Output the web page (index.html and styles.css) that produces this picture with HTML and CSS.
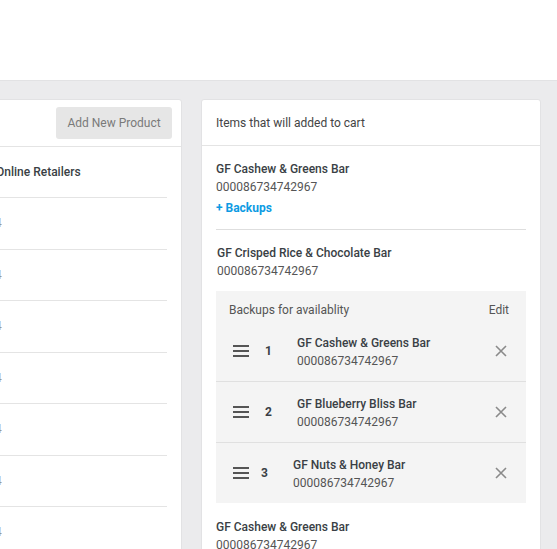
FILE: index.html
```html
<!DOCTYPE html>
<html>
<head>
<meta charset="utf-8">
<link rel="stylesheet" href="styles.css">
</head>
<body>
<div class="topbar"></div>
<div class="main">
  <div class="card left">
    <div class="left-head">
      <button class="btn">Add New Product</button>
    </div>
    <div class="lrow lrow-head"><span class="lhead">Online Retailers</span></div>
    <div class="lrow"><span class="lval">4</span></div>
    <div class="lrow"><span class="lval">4</span></div>
    <div class="lrow"><span class="lval">4</span></div>
    <div class="lrow"><span class="lval">4</span></div>
    <div class="lrow"><span class="lval">4</span></div>
    <div class="lrow"><span class="lval">4</span></div>
    <div class="lrow"><span class="lval">4</span></div>
  </div>
  <div class="card right">
    <div class="right-head">Items that will added to cart</div>
    <div class="right-body">
      <div class="item item-first">
        <div class="name">GF Cashew &amp; Greens Bar</div>
        <div class="code">000086734742967</div>
        <div class="backups-link">+ Backups</div>
      </div>
      <div class="item item-second">
        <div class="name">GF Crisped Rice &amp; Chocolate Bar</div>
        <div class="code">000086734742967</div>
      </div>
      <div class="panel">
        <div class="panel-head">
          <span>Backups for availablity</span>
          <span class="edit">Edit</span>
        </div>
        <div class="brow">
          <span class="drag"><i></i><i></i><i></i></span>
          <span class="num">1</span>
          <div class="binfo">
            <div class="name">GF Cashew &amp; Greens Bar</div>
            <div class="code">000086734742967</div>
          </div>
          <svg class="close" width="12" height="12" viewBox="0 0 12 12"><path d="M1 1L11 11M11 1L1 11" stroke="#8a8a8a" stroke-width="1.6" fill="none"/></svg>
        </div>
        <div class="brow">
          <span class="drag"><i></i><i></i><i></i></span>
          <span class="num">2</span>
          <div class="binfo">
            <div class="name">GF Blueberry Bliss Bar</div>
            <div class="code">000086734742967</div>
          </div>
          <svg class="close" width="12" height="12" viewBox="0 0 12 12"><path d="M1 1L11 11M11 1L1 11" stroke="#8a8a8a" stroke-width="1.6" fill="none"/></svg>
        </div>
        <div class="brow brow-tight">
          <span class="drag"><i></i><i></i><i></i></span>
          <span class="num">3</span>
          <div class="binfo">
            <div class="name">GF Nuts &amp; Honey Bar</div>
            <div class="code">000086734742967</div>
          </div>
          <svg class="close" width="12" height="12" viewBox="0 0 12 12"><path d="M1 1L11 11M11 1L1 11" stroke="#8a8a8a" stroke-width="1.6" fill="none"/></svg>
        </div>
      </div>
      <div class="item item-last">
        <div class="name">GF Cashew &amp; Greens Bar</div>
        <div class="code">000086734742967</div>
      </div>
    </div>
  </div>
</div>
</body>
</html>
```
FILE: styles.css
```css
* { box-sizing: border-box; }
html, body { margin: 0; padding: 0; }
body {
  font-family: Roboto, "Liberation Sans", sans-serif;
  font-size: 12px;
  color: #333;
  background: #ebebed;
  overflow: hidden;
  height: 549px;
}
.topbar {
  height: 81px;
  background: #fff;
  border-bottom: 1px solid #e2e2e4;
}
.main {
  display: flex;
  gap: 19px;
  padding: 18px 16px 0 0;
  height: 468px;
  overflow: hidden;
  align-items: flex-start;
}
.card {
  background: #fff;
  border: 1px solid #e2e2e4;
  border-radius: 3px;
  flex-shrink: 0;
  min-height: 600px;
}
.left {
  width: 202px;
  margin-left: -20px;
}
.left-head {
  height: 47px;
  border-bottom: 1px solid #e4e4e4;
  display: flex;
  justify-content: flex-end;
  align-items: flex-start;
  padding: 7px 9px 0 0;
}
.btn {
  font-family: Roboto, "Liberation Sans", sans-serif;
  font-size: 12px;
  color: #7a7a7a;
  background: #e6e6e6;
  border: none;
  border-radius: 3px;
  width: 116px;
  height: 32px;
  padding: 0;
}
.lrow {
  margin: 0 14px 0 14px;
  height: 51.5px;
  border-bottom: 1px solid #e4e4e4;
  display: flex;
  align-items: center;
}
.lrow-head { height: 51px; }
.lhead {
  font-weight: 500;
  color: #3a3f45;
  padding-left: 1px;
}
.lval {
  color: #999;
}
.right {
  width: 340px;
}
.right-head {
  height: 46px;
  border-bottom: 1px solid #e4e4e4;
  padding: 0 14px;
  display: flex;
  align-items: center;
  color: #444;
  font-size: 12px;
}
.right-body {
  padding: 14px 14px 0 14px;
}
.name {
  font-weight: 500;
  color: #3a3f45;
  line-height: 18px;
}
.code {
  color: #555;
  line-height: 18px;
}
.item-first {
  padding-bottom: 12px;
  border-bottom: 1px solid #dedede;
}
.backups-link {
  color: #0d9be3;
  font-weight: 700;
  line-height: 18px;
  margin-top: 3px;
}
.item-second {
  padding: 14px 0 0 1px;
}
.panel {
  margin-top: 11px;
  background: #f4f4f4;
}
.panel-head {
  height: 30px;
  padding: 10px 17px 0 13px;
  display: flex;
  justify-content: space-between;
  line-height: 18px;
  color: #555;
}
.edit { color: #555; }
.brow {
  height: 61px;
  display: flex;
  align-items: center;
  padding: 0 19px 0 17px;
  border-bottom: 1px solid #e0e0e0;
}
.brow:last-child { border-bottom: none; height: 60px; }
.drag {
  width: 16px;
  display: flex;
  flex-direction: column;
  gap: 2.6px;
}
.drag i {
  display: block;
  height: 2px;
  background: #555;
}
.num {
  font-weight: 700;
  color: #3a3f45;
  margin-left: 16px;
  width: 32px;
}
.brow-tight .num { margin-left: 12px; }
.binfo { flex: 1; padding-top: 1px; }
.close { flex-shrink: 0; }
.item-last {
  padding-top: 15px;
}
```
